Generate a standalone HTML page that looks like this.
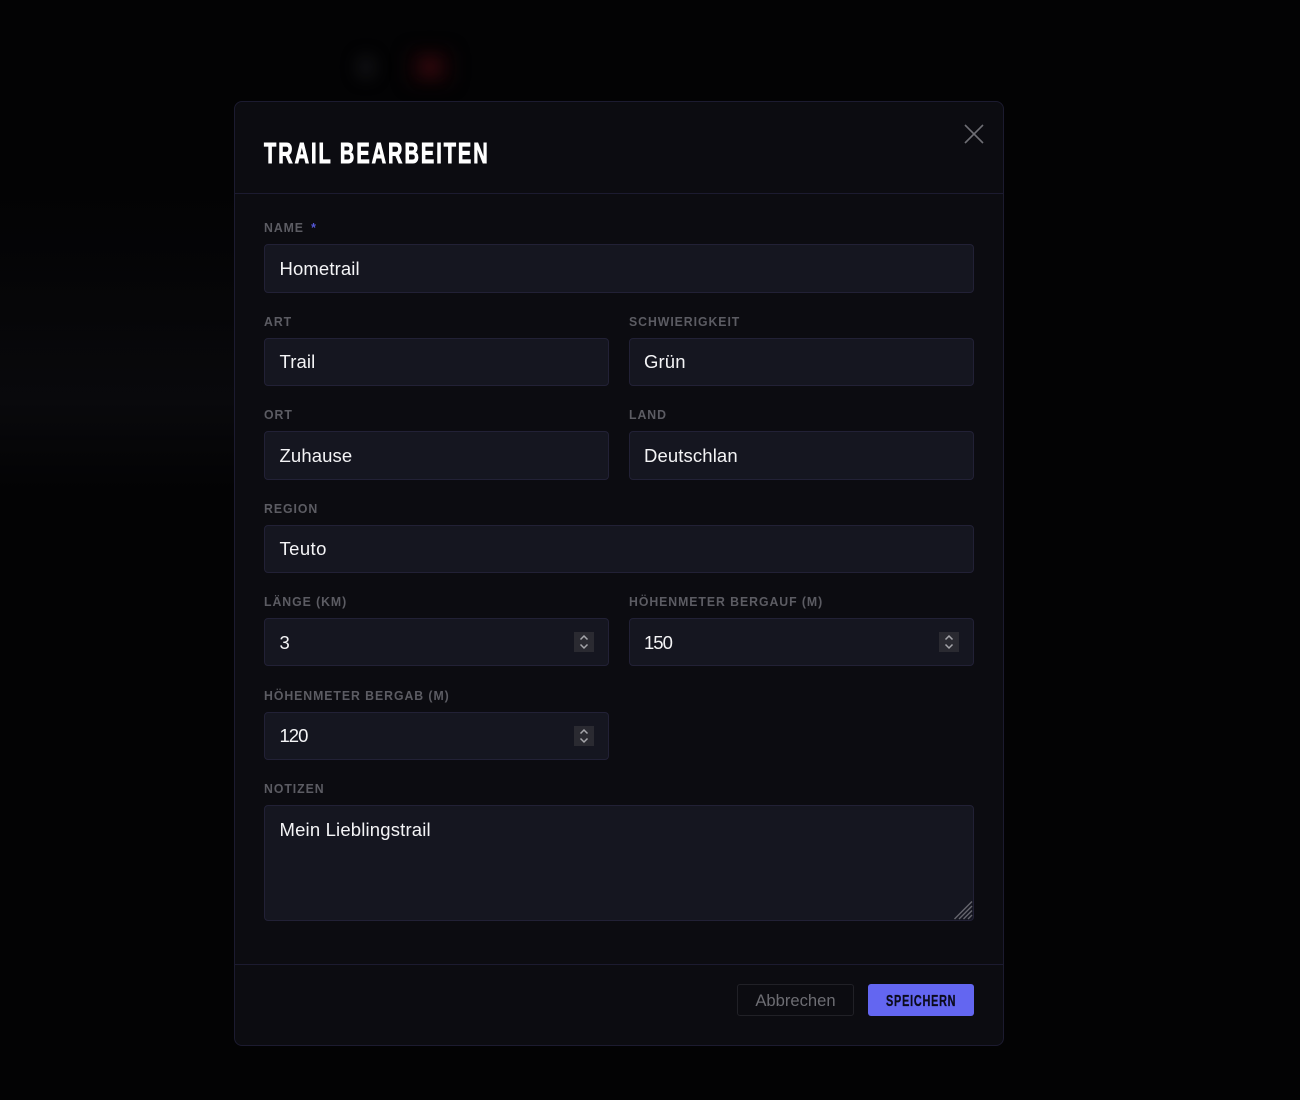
<!DOCTYPE html>
<html lang="de"><head><meta charset="utf-8"><title>Trail bearbeiten</title>
<style>
*{box-sizing:border-box}
html,body{margin:0;padding:0;width:1300px;height:1100px;overflow:hidden;background:#030304}
body{position:relative;font-family:"Liberation Sans",sans-serif}
.glow{position:absolute;filter:blur(8px);border-radius:50%}
.band{position:absolute;left:0;top:190px;width:234px;height:300px;background:linear-gradient(180deg,#030304 0%,#060608 40%,#09090c 70%,#030304 100%)}
.modal{position:absolute;left:234px;top:101px;width:770px;height:945px;background:#0c0c11;border:1px solid #1c1b30;border-radius:8px;overflow:hidden}
.topline{position:absolute;left:0;right:0;top:-1px;height:1px;background:linear-gradient(90deg,transparent,#3d3b80 50%,transparent)}
.hr{position:absolute;left:0;right:0;height:1px;background:#1c1b30}
.abs{position:absolute;white-space:nowrap}
.title{left:29px;top:34px;font-size:29px;line-height:36px;font-weight:700;color:#fff;letter-spacing:2.85px;transform:scaleX(.69);transform-origin:0 50%;-webkit-text-stroke:.9px #fff}
.lb{position:absolute;font-size:13px;line-height:16px;font-weight:700;color:#5c5c63;letter-spacing:1px;white-space:nowrap;transform:scaleX(.945);transform-origin:0 50%}
.lb b{color:#5557d8;margin-left:3px}
.f{position:absolute;background:#151620;border:1px solid #222136;border-radius:4px;color:#f4f4f6;font-size:18.5px;line-height:20px;padding:13px 15px 13px 14.5px;white-space:nowrap;letter-spacing:.12px}
.n{letter-spacing:-1px;padding-top:14px}
.spin{position:absolute;width:20px;height:20px;background:#2a2a31}
.spin svg{display:block}
.btn{position:absolute;top:882px;height:32px;border-radius:3px}
</style></head><body>
<div class="band"></div>
<div class="glow" style="left:358px;top:56px;width:16px;height:22px;background:#141417"></div>
<div class="glow" style="left:408px;top:50px;width:44px;height:34px;background:#130406;border-radius:6px"></div>
<div class="glow" style="left:423px;top:58px;width:14px;height:18px;background:#3f0a10"></div>
<div class="modal">
<div class="topline"></div>
<div class="abs title">TRAIL BEARBEITEN</div>
<svg class="abs" style="left:729px;top:22px" width="20" height="20" viewBox="0 0 20 20" fill="none" stroke="#6f6f75" stroke-width="1.6"><path d="M1 1L19 19M19 1L1 19"/></svg>
<div class="hr" style="top:91px"></div>

<div class="lb" style="left:29px;top:118px">NAME <b>*</b></div>
<div class="f" style="left:29px;top:142px;width:710px;height:49px;padding-top:14px">Hometrail</div>

<div class="lb" style="left:29px;top:212px">ART</div>
<div class="f" style="left:29px;top:236px;width:345px;height:48px">Trail</div>
<div class="lb" style="left:393.5px;top:212px">SCHWIERIGKEIT</div>
<div class="f" style="left:394px;top:236px;width:345px;height:48px;padding-left:14px">Grün</div>

<div class="lb" style="left:29px;top:305px">ORT</div>
<div class="f" style="left:29px;top:329px;width:345px;height:49px;padding-top:14px">Zuhause</div>
<div class="lb" style="left:393.5px;top:305px">LAND</div>
<div class="f" style="left:394px;top:329px;width:345px;height:49px;padding-top:14px;padding-left:14px">Deutschlan</div>

<div class="lb" style="left:29px;top:399px">REGION</div>
<div class="f" style="left:29px;top:423px;width:710px;height:48px;letter-spacing:.4px">Teuto</div>

<div class="lb" style="left:29px;top:492px">LÄNGE (KM)</div>
<div class="f n" style="left:29px;top:516px;width:345px;height:48px">3
<div class="spin" style="left:309px;top:13px"><svg width="20" height="20" viewBox="0 0 20 20" fill="none" stroke="#a5a5aa" stroke-width="1.5"><path d="M6.5 7.5L10 4L13.5 7.5M6.5 12.5L10 16L13.5 12.5"/></svg></div></div>
<div class="lb" style="left:393.5px;top:492px">HÖHENMETER BERGAUF (M)</div>
<div class="f n" style="left:394px;top:516px;width:345px;height:48px;padding-left:14px">150
<div class="spin" style="left:309px;top:13px"><svg width="20" height="20" viewBox="0 0 20 20" fill="none" stroke="#a5a5aa" stroke-width="1.5"><path d="M6.5 7.5L10 4L13.5 7.5M6.5 12.5L10 16L13.5 12.5"/></svg></div></div>

<div class="lb" style="left:29px;top:586px">HÖHENMETER BERGAB (M)</div>
<div class="f n" style="left:29px;top:610px;width:345px;height:48px;padding-top:13px">120
<div class="spin" style="left:309px;top:13px"><svg width="20" height="20" viewBox="0 0 20 20" fill="none" stroke="#a5a5aa" stroke-width="1.5"><path d="M6.5 7.5L10 4L13.5 7.5M6.5 12.5L10 16L13.5 12.5"/></svg></div></div>

<div class="lb" style="left:29px;top:679px">NOTIZEN</div>
<div class="f" style="left:29px;top:703px;width:710px;height:116px;padding-top:14px;letter-spacing:.17px">Mein Lieblingstrail
<svg class="abs" style="right:0;bottom:0" width="20" height="20" viewBox="0 0 20 20" fill="none" stroke="#66666d" stroke-width="1.4"><path d="M1.500 19L19 1.500M6 19L19 6M10.500 19L19 10.500M15 19L19 15"/></svg></div>

<div class="hr" style="top:862px"></div>
<div class="btn" style="left:502px;width:117px;border:1px solid #212127;color:#6d6d73;font-size:16.6px;line-height:31px;text-align:center">Abbrechen</div>
<div class="btn" style="left:633px;width:106px;background:#6366f1;color:#0b0b1c;font-size:15.5px;line-height:35px;font-weight:700;text-align:center;letter-spacing:1.1px;overflow:hidden"><span style="display:inline-block;transform:scaleX(.7);-webkit-text-stroke:.3px #0b0b1c">SPEICHERN</span></div>
</div>
</body></html>
